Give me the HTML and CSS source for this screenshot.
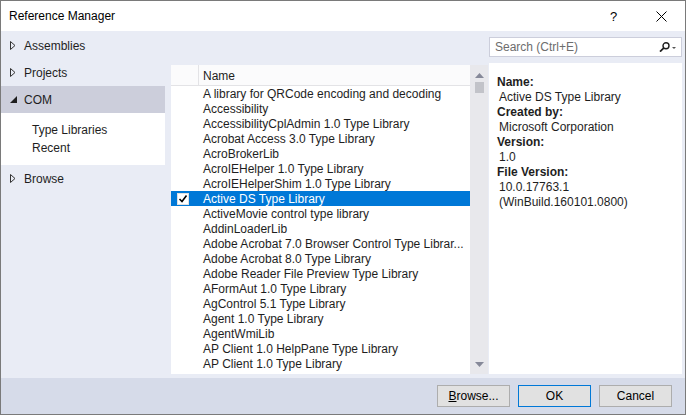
FILE: index.html
```html
<!DOCTYPE html>
<html>
<head>
<meta charset="utf-8">
<link rel="stylesheet" href="styles.css">
</head>
<body>
<div class="window">
  <div class="titlebar">
    <span class="title">Reference Manager</span>
    <span class="help">?</span>
    <svg class="close" width="11" height="11" viewBox="0 0 11 11"><path d="M0.5 0.5 L10.5 10.5 M10.5 0.5 L0.5 10.5" stroke="#000" stroke-width="1" fill="none"/></svg>
  </div>
  <div class="main">
    <div class="nav">
      <div class="nav-item"><svg class="tri" width="6" height="9" viewBox="0 0 6 9"><path d="M0.5 0.5 L5 4.5 L0.5 8.5 Z" fill="none" stroke="#333" stroke-width="1"/></svg>Assemblies</div>
      <div class="nav-item"><svg class="tri" width="6" height="9" viewBox="0 0 6 9"><path d="M0.5 0.5 L5 4.5 L0.5 8.5 Z" fill="none" stroke="#333" stroke-width="1"/></svg>Projects</div>
      <div class="nav-item active"><svg class="tri" width="7" height="7" viewBox="0 0 7 7"><path d="M7 0 L7 7 L0 7 Z" fill="#1e1e1e"/></svg>COM</div>
      <div class="nav-sub">
        <div class="sub-item">Type Libraries</div>
        <div class="sub-item">Recent</div>
      </div>
      <div class="nav-item"><svg class="tri" width="6" height="9" viewBox="0 0 6 9"><path d="M0.5 0.5 L5 4.5 L0.5 8.5 Z" fill="none" stroke="#333" stroke-width="1"/></svg>Browse</div>
    </div>
    <div class="center">
      <div class="list">
        <div class="list-body">
          <div class="header"><div class="hcheck"></div><div class="hname">Name</div></div>
          <div class="rows">
            <div class="row"><span class="chk"></span>A library for QRCode encoding and decoding</div>
            <div class="row"><span class="chk"></span>Accessibility</div>
            <div class="row"><span class="chk"></span>AccessibilityCplAdmin 1.0 Type Library</div>
            <div class="row"><span class="chk"></span>Acrobat Access 3.0 Type Library</div>
            <div class="row"><span class="chk"></span>AcroBrokerLib</div>
            <div class="row"><span class="chk"></span>AcroIEHelper 1.0 Type Library</div>
            <div class="row"><span class="chk"></span>AcroIEHelperShim 1.0 Type Library</div>
            <div class="row selected"><span class="chk"><span class="box"><svg width="10" height="10" viewBox="0 0 10 10"><path d="M1.5 5 L4 7.5 L8.5 1.5" fill="none" stroke="#000" stroke-width="1.6"/></svg></span></span>Active DS Type Library</div>
            <div class="row"><span class="chk"></span>ActiveMovie control type library</div>
            <div class="row"><span class="chk"></span>AddinLoaderLib</div>
            <div class="row"><span class="chk"></span>Adobe Acrobat 7.0 Browser Control Type Librar...</div>
            <div class="row"><span class="chk"></span>Adobe Acrobat 8.0 Type Library</div>
            <div class="row"><span class="chk"></span>Adobe Reader File Preview Type Library</div>
            <div class="row"><span class="chk"></span>AFormAut 1.0 Type Library</div>
            <div class="row"><span class="chk"></span>AgControl 5.1 Type Library</div>
            <div class="row"><span class="chk"></span>Agent 1.0 Type Library</div>
            <div class="row"><span class="chk"></span>AgentWmiLib</div>
            <div class="row"><span class="chk"></span>AP Client 1.0 HelpPane Type Library</div>
            <div class="row"><span class="chk"></span>AP Client 1.0 Type Library</div>
          </div>
        </div>
        <div class="scrollbar">
          <svg class="arrow" width="9" height="5" viewBox="0 0 9 5"><path d="M0 5 L4.5 0 L9 5 Z" fill="#868999"/></svg>
          <div class="thumb"></div>
          <div class="track"></div>
          <svg class="arrow" width="9" height="5" viewBox="0 0 9 5"><path d="M0 0 L9 0 L4.5 5 Z" fill="#868999"/></svg>
        </div>
      </div>
    </div>
    <div class="right">
      <div class="search">
        <span class="placeholder">Search (Ctrl+E)</span>
        <svg class="search-icon" width="18" height="10" viewBox="0 0 18 10"><circle cx="7" cy="3.8" r="3" fill="none" stroke="#1e1e1e" stroke-width="1.4"/><path d="M4.9 5.9 L1 9.6" stroke="#1e1e1e" stroke-width="1.8"/><path d="M13 5 L17 5 L15 7 Z" fill="#555"/></svg>
      </div>
      <div class="details">
        <div class="label">Name:</div>
        <div class="value">Active DS Type Library</div>
        <div class="label">Created by:</div>
        <div class="value">Microsoft Corporation</div>
        <div class="label">Version:</div>
        <div class="value">1.0</div>
        <div class="label">File Version:</div>
        <div class="value">10.0.17763.1</div>
        <div class="value">(WinBuild.160101.0800)</div>
      </div>
    </div>
  </div>
  <div class="bottombar">
    <button class="btn"><u>B</u>rowse...</button>
    <button class="btn default">OK</button>
    <button class="btn">Cancel</button>
  </div>
</div>
</body>
</html>
```

FILE: styles.css
```css
* { box-sizing: border-box; }
html, body { margin: 0; padding: 0; }
body {
  font-family: "Segoe UI", "Liberation Sans", Arial, sans-serif;
  font-size: 12px;
  color: #1e1e1e;
  background: #fff;
}
.window {
  width: 686px;
  height: 415px;
  border: 1px solid #7a7a7a;
  display: flex;
  flex-direction: column;
  background: #e9ecf5;
}
.titlebar {
  height: 30px;
  background: #fff;
  display: flex;
  align-items: center;
  padding-left: 8px;
  flex: none;
}
.title { color: #000; flex: 1; }
.help { width: 10px; font-size: 13px; color: #000; margin-right: 36px; }
.close { margin-right: 18px; }
.main {
  flex: 1;
  display: flex;
  min-height: 0;
}
.nav {
  width: 164px;
  flex: none;
  padding-top: 1px;
}
.nav-item {
  height: 27px;
  display: flex;
  align-items: center;
  padding-left: 9px;
  font-size: 12px;
  color: #1e1e1e;
}
.nav-item .tri { margin-right: 8px; }
.nav-item.active { background: #cccedb; }
.nav-item.active .tri { margin-right: 7px; }
.nav-sub {
  background: #fff;
  padding: 8px 0 8px 31px;
}
.sub-item { height: 18px; line-height: 18px; }
.center {
  width: 324px;
  flex: none;
  padding: 34px 1px 4px 6px;
  display: flex;
}
.list {
  flex: 1;
  display: flex;
  background: #fff;
}
.list-body {
  flex: 1;
  display: flex;
  flex-direction: column;
  overflow: hidden;
}
.header {
  height: 21px;
  display: flex;
  background: #fbfbfc;
  border-bottom: 1px solid #e3e3e6;
  flex: none;
}
.hcheck { width: 28px; border-right: 1px solid #e3e3e6; }
.hname { padding-left: 4px; padding-top: 1px; line-height: 20px; }
.rows { overflow: hidden; }
.row {
  height: 15px;
  line-height: 15px;
  padding-top: 1px;
  display: flex;
  white-space: nowrap;
  color: #1e1e1e;
}
.row .chk { width: 32px; height: 14px; flex: none; display: flex; align-items: center; padding-left: 6px; }
.row.selected { background: #0078d7; color: #fff; }
.box {
  width: 12px; height: 12px;
  background: #fff;
  border: 1px solid #e0e0e0;
  display: flex; align-items: center; justify-content: center;
}
.scrollbar {
  width: 18px;
  flex: none;
  background: #e8e8ec;
  display: flex;
  flex-direction: column;
  align-items: center;
  padding: 8px 0 7px;
}
.thumb {
  width: 9px;
  height: 11px;
  background: #c2c3c9;
  margin-top: 4px;
  margin-left: 1px;
}
.track { flex: 1; }
.right {
  flex: 1;
  padding: 6px 3px 4px 0;
  display: flex;
  flex-direction: column;
  gap: 6px;
}
.search {
  height: 20px;
  background: #fff;
  border: 1px solid #cccedb;
  display: flex;
  align-items: center;
  padding: 0 4px 0 5px;
  flex: none;
}
.placeholder { flex: 1; color: #6d6d6d; }
.details {
  flex: 1;
  background: #fff;
  padding: 12px 8px;
}
.label { font-weight: bold; height: 15px; line-height: 15px; color: #1e1e1e; }
.value { height: 15px; line-height: 15px; padding-left: 2px; }
.bottombar {
  height: 36px;
  flex: none;
  background: #d6dbe9;
  display: flex;
  justify-content: flex-end;
  align-items: flex-start;
  padding: 7px 13px 0 0;
  gap: 8px;
}
.btn {
  width: 73px;
  height: 22px;
  background: #e1e1e1;
  border: 1px solid #adadad;
  font-family: inherit;
  font-size: 12px;
  color: #000;
  padding: 0;
}
.btn.default { border-color: #0078d7; }
```
